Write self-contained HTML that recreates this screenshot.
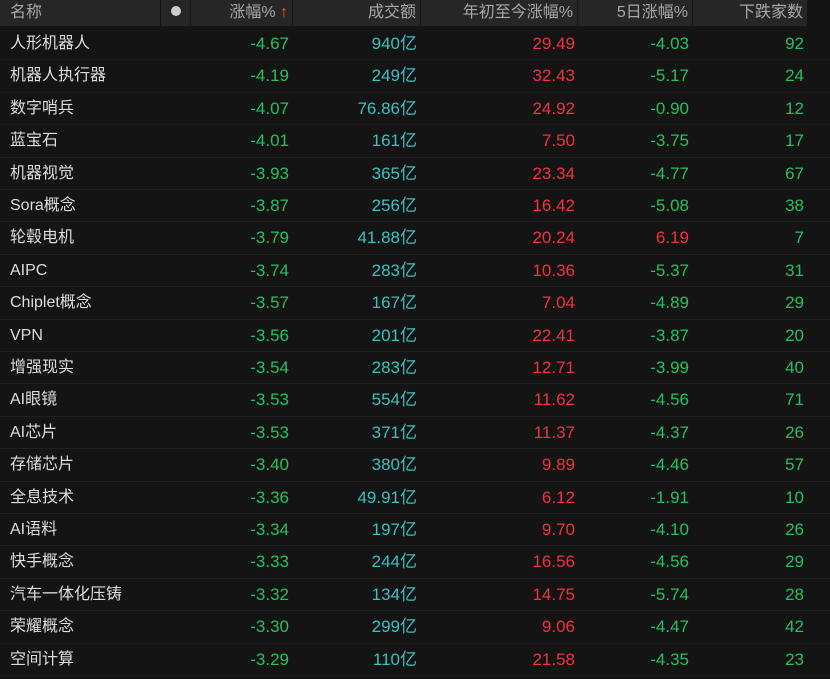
<!DOCTYPE html><html><head><meta charset="utf-8"><style>
body{margin:0;background:#141414;width:830px;height:679px;overflow:hidden;font-family:"Liberation Sans","Noto Sans CJK SC",sans-serif;font-size:16px}
.hd{position:absolute;top:0;left:0;width:830px;height:26px;background:#141414}
.hc{position:absolute;top:0;height:26px;background:#262626;color:#a8a8a8;line-height:26px;text-align:right;box-sizing:border-box;padding-right:4px}
.row{position:absolute;left:0;width:830px;height:32.4px;border-bottom:1px solid #202020;box-sizing:border-box;line-height:31px}
.row span{position:absolute;top:0;font-size:17px}
.row span.n{font-size:16px}
.n{left:10px;color:#ddd}
.g{color:#27c05c}.r{color:#f0323c}.t{color:#3cc0c0}
</style></head><body>
<div class="hd">
<div class="hc" style="left:0;width:160px;text-align:left;padding-left:10px">名称</div>
<div class="hc" style="left:161px;width:29px;text-align:center;padding:0"><span style="display:inline-block;width:10px;height:10px;border-radius:50%;background:#ccc;vertical-align:middle;margin-top:-3px"></span></div>
<div class="hc" style="left:191px;width:101px">涨幅% <span style="color:#ff5a2a;font-weight:bold">↑</span></div>
<div class="hc" style="left:293px;width:127px">成交额</div>
<div class="hc" style="left:421px;width:156px">年初至今涨幅%</div>
<div class="hc" style="left:578px;width:114px">5日涨幅%</div>
<div class="hc" style="left:693px;width:114px">下跌家数</div>
</div>
<div id="rows"></div>
<script>
const d=[["人形机器人","-4.67","940亿","29.49","-4.03","92"],["机器人执行器","-4.19","249亿","32.43","-5.17","24"],["数字哨兵","-4.07","76.86亿","24.92","-0.90","12"],["蓝宝石","-4.01","161亿","7.50","-3.75","17"],["机器视觉","-3.93","365亿","23.34","-4.77","67"],["Sora概念","-3.87","256亿","16.42","-5.08","38"],["轮毂电机","-3.79","41.88亿","20.24","6.19","7"],["AIPC","-3.74","283亿","10.36","-5.37","31"],["Chiplet概念","-3.57","167亿","7.04","-4.89","29"],["VPN","-3.56","201亿","22.41","-3.87","20"],["增强现实","-3.54","283亿","12.71","-3.99","40"],["AI眼镜","-3.53","554亿","11.62","-4.56","71"],["AI芯片","-3.53","371亿","11.37","-4.37","26"],["存储芯片","-3.40","380亿","9.89","-4.46","57"],["全息技术","-3.36","49.91亿","6.12","-1.91","10"],["AI语料","-3.34","197亿","9.70","-4.10","26"],["快手概念","-3.33","244亿","16.56","-4.56","29"],["汽车一体化压铸","-3.32","134亿","14.75","-5.74","28"],["荣耀概念","-3.30","299亿","9.06","-4.47","42"],["空间计算","-3.29","110亿","21.58","-4.35","23"]];
let h="";d.forEach((r,i)=>{const top=28+i*32.4;
h+=`<div class="row" style="top:${top}px"><span class="n">${r[0]}</span><span class="g" style="right:${830-289}px">${r[1]}</span><span class="t" style="right:${830-417}px">${r[2]}</span><span class="r" style="right:${830-575}px">${r[3]}</span><span class="${r[4][0]=='-'?'g':'r'}" style="right:${830-689}px">${r[4]}</span><span class="g" style="right:${830-804}px">${r[5]}</span></div>`});
document.getElementById("rows").innerHTML=h;
</script>
</body></html>
